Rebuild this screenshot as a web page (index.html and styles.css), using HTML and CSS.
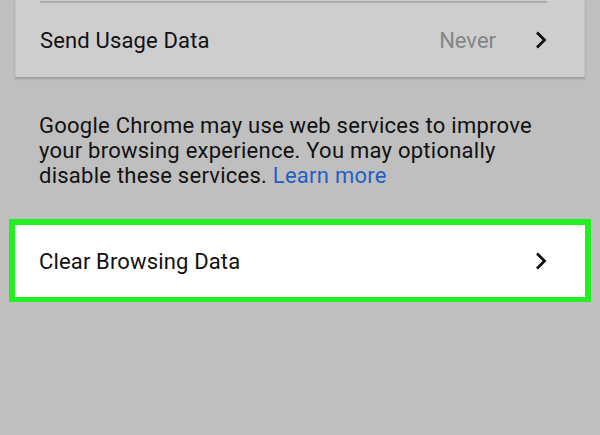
FILE: index.html
```html
<!DOCTYPE html>
<html>
<head>
<meta charset="utf-8">
<link rel="stylesheet" href="styles.css">
</head>
<body>
<div class="page">
  <div class="card">
    <div class="divider"></div>
    <div class="row">
      <span class="label">Send Usage Data</span>
      <span class="value">Never</span>
      <svg class="chev" viewBox="0 0 12 18" width="12" height="18"><path d="M2 1.5 L9.5 9 L2 16.5" fill="none" stroke="#111" stroke-width="2.8"/></svg>
    </div>
  </div>
  <p class="info">Google Chrome may use web services to improve your browsing experience. You may optionally disable these services. <span class="link">Learn more</span></p>
  <div class="highlight">
    <div class="row white">
      <span class="label">Clear Browsing Data</span>
      <svg class="chev" viewBox="0 0 12 18" width="12" height="18"><path d="M2 1.5 L9.5 9 L2 16.5" fill="none" stroke="#111" stroke-width="2.8"/></svg>
    </div>
  </div>
</div>
</body>
</html>
```
FILE: styles.css
```css
html, body {
  margin: 0;
  padding: 0;
  background: #bfbfbf;
}
body {
  width: 600px;
  height: 435px;
  overflow: hidden;
  font-family: Roboto, "Noto Sans", sans-serif;
  color: #111;
}
.page {
  display: flex;
  flex-direction: column;
}
.card {
  margin: 0 15px;
  background: #cecece;
  border-left: 1px solid #c4c4c4;
  border-right: 1px solid #c4c4c4;
  box-shadow: 0 2px 2px rgba(0,0,0,0.18);
  padding: 0 37px 0 24px;
  height: 77px;
}
.divider {
  height: 2px;
  margin-top: 1px;
  background: #acacac;
}
.row {
  display: flex;
  align-items: center;
  height: 74px;
}
.label {
  font-size: 22px;
  flex: 1;
  letter-spacing: 0.15px;
}
.value {
  font-size: 22px;
  color: #858585;
  margin-right: 39px;
}
.chev {
  display: block;
}
.info {
  margin: 36px 0 0 39px;
  width: 520px;
  font-size: 22px;
  line-height: 25px;
  letter-spacing: 0.25px;
}
.link {
  color: #1f5fc4;
}
.highlight {
  margin: 31px 9px 0 9px;
  border: 6px solid #22f022;
  border-bottom-width: 5px;
  background: #fff;
}
.row.white {
  height: 72px;
  padding: 0 38px 0 24px;
}
```
